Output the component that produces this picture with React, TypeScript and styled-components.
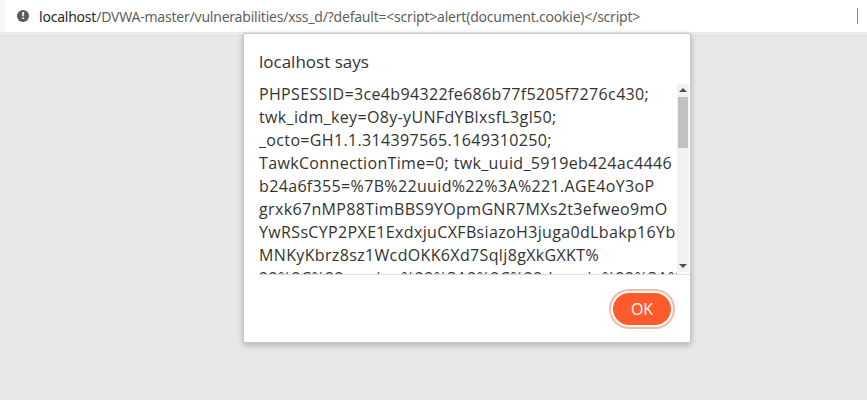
import React from 'react';
import styled, {createGlobalStyle} from 'styled-components';

const GlobalStyle = createGlobalStyle`
    html, body {
        margin: 0;
        padding: 0;
        background: #e8e8e8;
        font-family: "Open Sans", "Noto Sans", sans-serif;
    }
`

const cookieLines = [
    'PHPSESSID=3ce4b94322fe686b77f5205f7276c430;',
    'twk_idm_key=O8y-yUNFdYBlxsfL3gl50;',
    '_octo=GH1.1.314397565.1649310250;',
    'TawkConnectionTime=0; twk_uuid_5919eb424ac4446',
    'b24a6f355=%7B%22uuid%22%3A%221.AGE4oY3oP',
    'grxk67nMP88TimBBS9YOpmGNR7MXs2t3efweo9mO',
    'YwRSsCYP2PXE1ExdxjuCXFBsiazoH3juga0dLbakp16Yb',
    'MNKyKbrz8sz1WcdOKK6Xd7Sqlj8gXkGXKT%',
    '22%2C%22version%22%3A2%2C%22domain%22%3A%22',
];

export default function App() {
    return (
        <Page>
            <GlobalStyle/>
            <Toolbar>
                <Omnibox>
                    <InfoIcon>!</InfoIcon>
                    <Url>
                        <Host>localhost</Host>/DVWA-master/vulnerabilities/xss_d/?default=&lt;script&gt;alert(document.cookie)&lt;/script&gt;
                    </Url>
                    <Caret/>
                </Omnibox>
            </Toolbar>
            <ToolbarShade/>

            <Dialog>
                <Title>localhost says</Title>
                <Message>
                    <MessageText>
                        <Lines>
                            {cookieLines.map((line, i) => (
                                <Line key={i}>{line}</Line>
                            ))}
                        </Lines>
                    </MessageText>
                    <Scrollbar>
                        <Arrow direction={'up'}/>
                        <Track>
                            <Thumb/>
                        </Track>
                        <Arrow direction={'down'}/>
                    </Scrollbar>
                </Message>
                <Footer>
                    <OkButton>OK</OkButton>
                </Footer>
            </Dialog>
        </Page>
    );
}

const Page = styled.div`
    position: relative;
    width: 867px;
    height: 400px;
    overflow: hidden;
    background: #e8e8e8;
`

const Toolbar = styled.div`
    height: 32px;
    background: #f8f8f8;
    padding: 0 0 0 5px;
    display: flex;
`

const ToolbarShade = styled.div`
    height: 3px;
    background: #ececec;
    border-bottom: 1px solid #e0e0e0;
`

const Omnibox = styled.div`
    flex: 1;
    display: flex;
    align-items: center;
    background: #ffffff;
    border-radius: 0 0 0 4px;
    padding-left: 12px;
    position: relative;
`

const InfoIcon = styled.span`
    width: 12px;
    height: 12px;
    border-radius: 50%;
    background: #5a5a5a;
    color: #ffffff;
    font-family: "DejaVu Sans", sans-serif;
    font-weight: bold;
    font-size: 9px;
    line-height: 12px;
    text-align: center;
    margin-right: 10px;
`

const Url = styled.span`
    font-family: "Noto Sans", sans-serif;
    font-size: 14px;
    color: #5f5f5f;
    white-space: nowrap;
    letter-spacing: -0.22px;
`

const Host = styled.span`
    color: #2a2a2a;
`

const Caret = styled.span`
    position: absolute;
    right: 9px;
    top: 8px;
    width: 1px;
    height: 16px;
    background: #8a8a8a;
`

const Dialog = styled.div`
    position: absolute;
    left: 243px;
    top: 33px;
    width: 446px;
    background: #ffffff;
    border: 1px solid #c8c8c8;
    border-radius: 2px;
    box-shadow: 0 2px 6px rgba(0, 0, 0, 0.25);
    color: #333333;
`

const Title = styled.div`
    font-size: 17px;
    line-height: 22px;
    padding: 17px 15px 0 15px;
    margin-bottom: 11px;
`

const Message = styled.div`
    display: flex;
    height: 190px;
    margin-left: 15px;
    border-bottom: 1px solid #dcdcdc;
`

const MessageText = styled.div`
    flex: 1;
    overflow: hidden;
`

const Lines = styled.div`
    margin-top: -1px;
    font-size: 16px;
    letter-spacing: 0.35px;
    line-height: 23px;
`

const Line = styled.div`
    white-space: nowrap;
`

const Scrollbar = styled.div`
    width: 12px;
    height: 188px;
    margin-right: 1px;
    background: #f1f1f1;
    display: flex;
    flex-direction: column;
`

const Arrow = styled.div<{direction: 'up' | 'down'}>`
    height: 12px;
    display: flex;
    align-items: center;
    justify-content: center;

    &::after {
        content: '';
        border-left: 4px solid transparent;
        border-right: 4px solid transparent;
        ${p => p.direction === 'up'
            ? 'border-bottom: 4px solid #505050;'
            : 'border-top: 4px solid #505050;'}
    }
`

const Track = styled.div`
    flex: 1;
    padding: 1px 1px 0 1px;
`

const Thumb = styled.div`
    height: 51px;
    background: #c1c1c1;
`

const Footer = styled.div`
    display: flex;
    justify-content: flex-end;
    padding: 18px 19px 17px 0;
`

const OkButton = styled.button`
    width: 58px;
    height: 32px;
    border: none;
    border-radius: 16px;
    background: #fe5a2b;
    color: #ffffff;
    font-family: "Open Sans", sans-serif;
    font-size: 16px;
    box-shadow: 0 0 0 2px #ffffff, 0 0 0 4px #f8b9a6;
    cursor: pointer;
`
